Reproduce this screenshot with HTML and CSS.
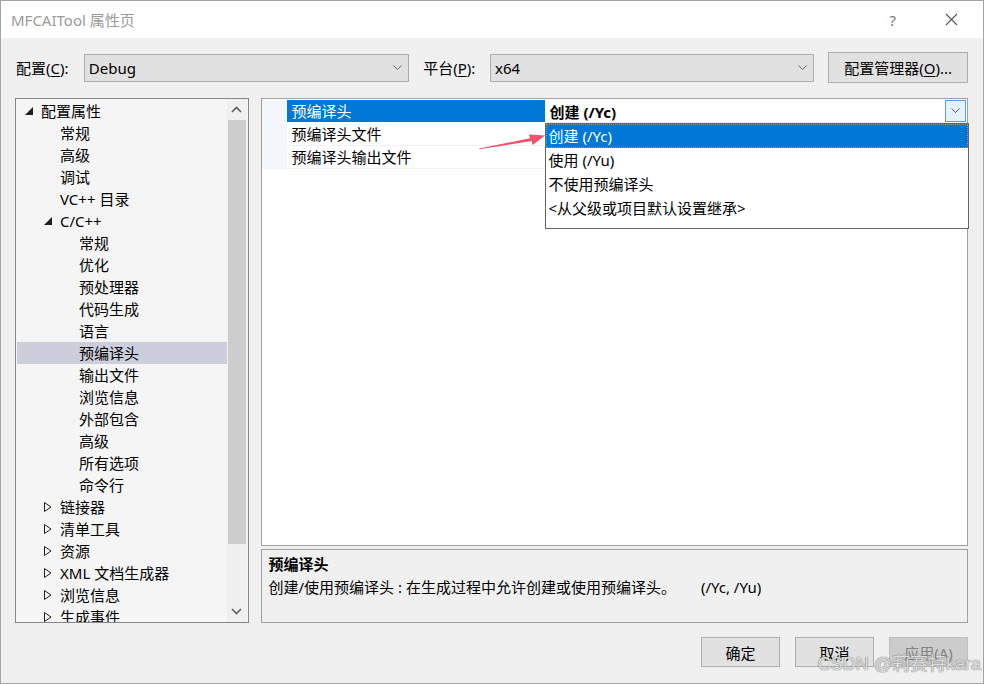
FILE: index.html
```html
<!DOCTYPE html>
<html>
<head>
	<meta charset="UTF-8">
	<title>MFCAITool 属性页</title>
	<link rel="stylesheet" href="styles.css">
</head>
<body>
	<div class="window">
		<div class="titlebar">
			<span class="title">MFCAITool 属性页</span>
			<span class="help">?</span>
			<svg class="close" width="13" height="13" viewBox="0 0 13 13"><path d="M1 1L12 12M12 1L1 12" stroke="#555" stroke-width="1.1" fill="none"/></svg>
		</div>

		<div class="body">
			<!-- 配置 / 平台 -->
			<div class="toprow">
				<span class="lbl">配置(<u>C</u>):</span>
				<div class="combo cfg">
					<span>Debug</span>
					<svg width="9" height="6" viewBox="0 0 9 6"><path d="M0.5 0.5L4.5 4.5L8.5 0.5" stroke="#666" fill="none"/></svg>
				</div>
				<span class="lbl lbl2">平台(<u>P</u>):</span>
				<div class="combo plat">
					<span>x64</span>
					<svg width="9" height="6" viewBox="0 0 9 6"><path d="M0.5 0.5L4.5 4.5L8.5 0.5" stroke="#666" fill="none"/></svg>
				</div>
				<div class="btn mgr">配置管理器(<u>O</u>)...</div>
			</div>

			<div class="main">
				<!-- 左侧树 -->
				<div class="tree">
					<div class="list">
						<div class="row l0"><span class="tg"><svg width="9" height="8" viewBox="0 0 9 8"><path d="M8 0L8 8L0 8Z" fill="#1e1e1e"/></svg></span>配置属性</div>
						<div class="row l1">常规</div>
						<div class="row l1">高级</div>
						<div class="row l1">调试</div>
						<div class="row l1">VC++ 目录</div>
						<div class="row l1"><span class="tg"><svg width="9" height="8" viewBox="0 0 9 8"><path d="M8 0L8 8L0 8Z" fill="#1e1e1e"/></svg></span>C/C++</div>
						<div class="row l2">常规</div>
						<div class="row l2">优化</div>
						<div class="row l2">预处理器</div>
						<div class="row l2">代码生成</div>
						<div class="row l2">语言</div>
						<div class="row l2 sel">预编译头</div>
						<div class="row l2">输出文件</div>
						<div class="row l2">浏览信息</div>
						<div class="row l2">外部包含</div>
						<div class="row l2">高级</div>
						<div class="row l2">所有选项</div>
						<div class="row l2">命令行</div>
						<div class="row l1"><span class="tg"><svg width="8" height="10" viewBox="0 0 8 10"><path d="M0.5 0.5L7 5L0.5 9.5Z" stroke="#1e1e1e" fill="none"/></svg></span>链接器</div>
						<div class="row l1"><span class="tg"><svg width="8" height="10" viewBox="0 0 8 10"><path d="M0.5 0.5L7 5L0.5 9.5Z" stroke="#1e1e1e" fill="none"/></svg></span>清单工具</div>
						<div class="row l1"><span class="tg"><svg width="8" height="10" viewBox="0 0 8 10"><path d="M0.5 0.5L7 5L0.5 9.5Z" stroke="#1e1e1e" fill="none"/></svg></span>资源</div>
						<div class="row l1"><span class="tg"><svg width="8" height="10" viewBox="0 0 8 10"><path d="M0.5 0.5L7 5L0.5 9.5Z" stroke="#1e1e1e" fill="none"/></svg></span>XML 文档生成器</div>
						<div class="row l1"><span class="tg"><svg width="8" height="10" viewBox="0 0 8 10"><path d="M0.5 0.5L7 5L0.5 9.5Z" stroke="#1e1e1e" fill="none"/></svg></span>浏览信息</div>
						<div class="row l1"><span class="tg"><svg width="8" height="10" viewBox="0 0 8 10"><path d="M0.5 0.5L7 5L0.5 9.5Z" stroke="#1e1e1e" fill="none"/></svg></span>生成事件</div>
					</div>
					<div class="vscroll">
						<div class="arrow"><svg width="11" height="7" viewBox="0 0 11 7"><path d="M1 6L5.5 1.5L10 6" stroke="#606060" stroke-width="1.6" fill="none"/></svg></div>
						<div class="thumb"></div>
						<div class="track"></div>
						<div class="arrow"><svg width="11" height="7" viewBox="0 0 11 7"><path d="M1 1L5.5 5.5L10 1" stroke="#606060" stroke-width="1.6" fill="none"/></svg></div>
					</div>
				</div>

				<!-- 右侧属性 -->
				<div class="right">
					<div class="grid">
						<div class="prow">
							<div class="gutter"></div>
							<div class="pname active">预编译头</div>
							<div class="pval">
								<b>创建 (/Yc)</b>
								<div class="dropbtn"><svg width="9" height="6" viewBox="0 0 9 6"><path d="M0.5 0.5L4.5 4.5L8.5 0.5" stroke="#555" fill="none"/></svg></div>
							</div>
						</div>
						<div class="prow">
							<div class="gutter"></div>
							<div class="pname">预编译头文件</div>
							<div class="pval"></div>
						</div>
						<div class="prow">
							<div class="gutter"></div>
							<div class="pname">预编译头输出文件</div>
							<div class="pval"></div>
						</div>

						<div class="dropdown">
							<div class="opt cur">创建 (/Yc)</div>
							<div class="opt">使用 (/Yu)</div>
							<div class="opt">不使用预编译头</div>
							<div class="opt">&lt;从父级或项目默认设置继承&gt;</div>
						</div>

						<svg class="redarrow" width="70" height="24" viewBox="0 0 70 24">
							<path d="M1 21.5L52 11.2L51 7.5L67 8.5L54.5 18L53.5 14L1.3 22.3Z" fill="#f0506a"/>
						</svg>
					</div>

					<div class="desc">
						<div class="dtitle">预编译头</div>
						<div class="dtext">创建/使用预编译头 : 在生成过程中允许创建或使用预编译头。<span class="flags">(/Yc, /Yu)</span></div>
					</div>
				</div>
			</div>

			<div class="buttons">
				<div class="btn">确定</div>
				<div class="btn">取消</div>
				<div class="btn off">应用(A)</div>
			</div>
		</div>

		<div class="watermark">CSDN @莉赛特kara</div>
	</div>
</body>
</html>
```

FILE: styles.css
```css
* {
	margin: 0;
	padding: 0;
	box-sizing: border-box;
}

body {
	background: #f0f0f0;
	font-family: "Noto Sans", "Noto Sans CJK SC", sans-serif;
	font-size: 15px;
	color: #000;
}

u {
	text-decoration: underline;
	text-underline-offset: 2px;
}

.window {
	position: relative;
	width: 984px;
	height: 684px;
	border: 1px solid #a3a3a3;
	background: #f0f0f0;
	overflow: hidden;
}

.titlebar {
	height: 37px;
	background: white;
	display: flex;
	align-items: center;
	padding-left: 10px;
}

.title {
	flex: 1;
	color: #9a9a9a;
	font-size: 15px;
}

.help {
	color: #777;
	font-size: 15px;
	margin-right: 49px;
}

.close {
	margin-right: 25px;
}

.body {
	padding: 15px 15px 0 14px;
}

/* 顶部 */
.toprow {
	display: flex;
	align-items: flex-end;
	height: 29px;
}

.lbl {
	width: 69px;
	padding-left: 1px;
	line-height: 28px;
}

.lbl2 {
	width: 68px;
	margin-left: 13px;
}

.combo {
	height: 28px;
	background: #e1e1e1;
	border: 1px solid #adadad;
	display: flex;
	align-items: center;
	justify-content: space-between;
	padding: 0 6px 0 4px;
}

.cfg {
	width: 326px;
}

.plat {
	width: 325px;
}

.btn {
	width: 79px;
	height: 30px;
	background: #e1e1e1;
	border: 1px solid #adadad;
	display: flex;
	align-items: center;
	justify-content: center;
}

.mgr {
	width: 140px;
	height: 31px;
	margin-left: 14px;
	margin-bottom: -1px;
}

/* 主区域 */
.main {
	display: flex;
	gap: 12px;
	margin-top: 16px;
	height: 525px;
}

.tree {
	width: 234px;
	border: 1px solid #828790;
	background: #f5f5f5;
	display: flex;
	overflow: hidden;
}

.list {
	flex: 1;
	padding-top: 1px;
	padding-left: 1px;
}

.row {
	height: 22px;
	line-height: 22px;
	display: flex;
	align-items: center;
	white-space: nowrap;
}

.row.l0 { padding-left: 8px; }
.row.l1 { padding-left: 43px; }
.row.l2 { padding-left: 62px; }
.row.l1 .tg { margin-left: -16px; }
.row.l0 .tg { margin-left: 0; }

.tg {
	width: 16px;
	height: 22px;
	display: flex;
	align-items: center;
	flex-shrink: 0;
}

.row.sel {
	background: #cccedb;
}

.vscroll {
	width: 20px;
	margin-right: 1px;
	display: flex;
	flex-direction: column;
	background: #f0f0f0;
}

.vscroll .arrow {
	height: 21px;
	display: flex;
	align-items: center;
	justify-content: center;
}

.thumb {
	height: 424px;
	margin: 0 1px;
	background: #cdcdcd;
}

.track {
	flex: 1;
}

/* 属性表 */
.right {
	width: 709px;
	display: flex;
	flex-direction: column;
	gap: 3px;
}

.grid {
	position: relative;
	height: 448px;
	background: white;
	border: 1px solid #a0a0a0;
	padding-top: 1px;
}

.prow {
	display: flex;
	height: 23px;
}

.gutter {
	width: 25px;
	background: #f3f6fb;
}

.pname {
	width: 258px;
	padding-left: 5px;
	line-height: 22px;
	border-bottom: 1px solid #eef1f6;
}

.pname.active {
	background: #0078d7;
	color: white;
	border-bottom-color: white;
}

.pval {
	flex: 1;
	display: flex;
	align-items: center;
	justify-content: space-between;
	padding-left: 5px;
	padding-right: 1px;
	height: 23px;
	border-bottom: 1px solid #eef1f6;
}

.pval b {
	font-weight: bold;
}

.dropbtn {
	width: 21px;
	height: 22px;
	border: 1px solid #569de5;
	background: #e5f1fb;
	display: flex;
	align-items: center;
	justify-content: center;
	align-self: flex-start;
}

.dropdown {
	position: absolute;
	left: 283px;
	top: 24px;
	width: 424px;
	height: 106px;
	background: white;
	border: 1px solid #646464;
}

.opt {
	height: 24px;
	line-height: 24px;
	padding-left: 3px;
}

.opt.cur {
	background: #0078d7;
	color: white;
	outline: 1px dotted #d08a30;
	outline-offset: -1px;
}

.redarrow {
	position: absolute;
	left: 216px;
	top: 28px;
}

.desc {
	height: 74px;
	border: 1px solid #a0a0a0;
	background: #f0f0f0;
	padding: 3px 7px;
}

.dtitle {
	font-weight: bold;
	line-height: 22px;
}

.dtext {
	line-height: 24px;
}

.flags {
	margin-left: 25px;
}

/* 底部按钮 */
.buttons {
	display: flex;
	justify-content: flex-end;
	gap: 15px;
	margin-top: 14px;
}

.btn.off {
	background: #cccccc;
	border-color: #bfbfbf;
	color: #838383;
}

.watermark {
	position: absolute;
	right: 2px;
	bottom: 8px;
	font-size: 18px;
	color: rgba(255, 255, 255, 0.75);
	text-shadow: 0 0 1px #777, 0 0 1px #777;
	font-family: "Liberation Sans", "Noto Sans CJK SC", sans-serif;
}
```
